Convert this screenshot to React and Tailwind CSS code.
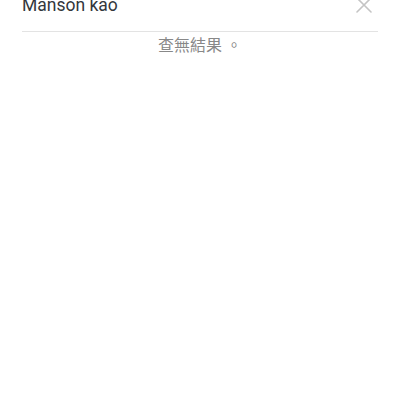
export default function App() {
  return (
    <div className="w-[400px] h-[400px] bg-white overflow-hidden" style={{ fontFamily: 'Roboto, "Noto Sans CJK TC", sans-serif' }}>
      <div className="px-[22px]">
        <div className="-mt-[18px] h-[50px] flex items-center justify-between border-b border-[#e3e3e3]">
          <span className="mb-[4px] text-[17.5px] leading-[24px] text-[#33373c]">Manson kao</span>
          <svg width="18" height="18" viewBox="0 0 18 18" className="mr-[5px] mb-[4px]" fill="none" stroke="#c4c4c4" strokeWidth="1.6" strokeLinecap="round">
            <path d="M2 2L16 16M16 2L2 16" />
          </svg>
        </div>
        <div className="pt-[3px] text-center text-[16px] leading-[22px] text-[#888888]">查無結果 。</div>
      </div>
    </div>
  );
}
